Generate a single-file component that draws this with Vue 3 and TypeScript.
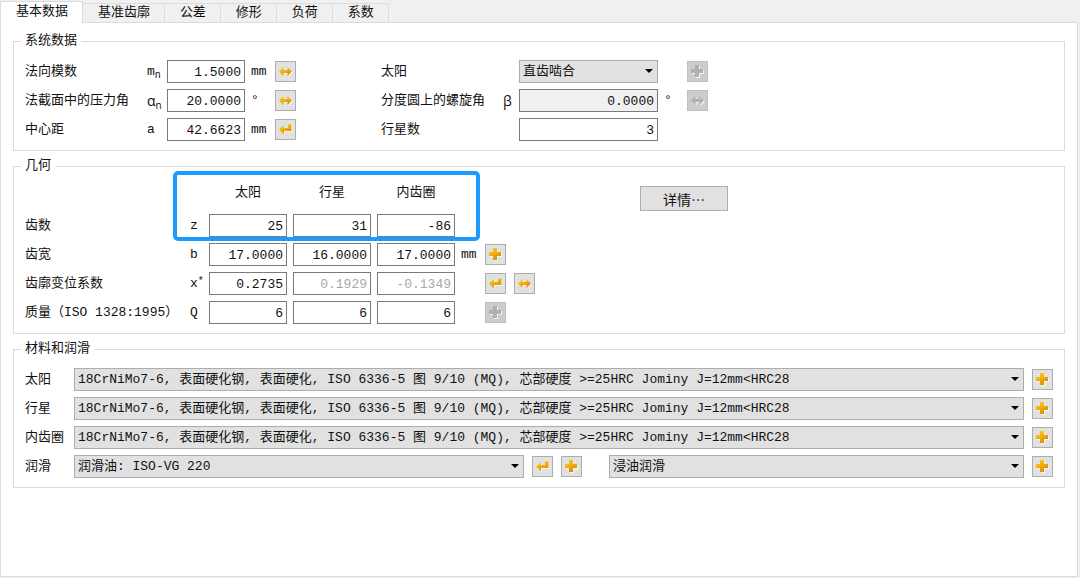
<script setup lang="ts">
import { reactive, ref } from 'vue'

type IconName = 'plus' | 'swap' | 'enter'

interface Field {
  id: string
  label: string
  symbol: string
  sub?: string
  greek?: boolean
  value: string
  unit: string
  icon: IconName
}

interface GeometryRow {
  id: string
  label: string
  symbol: string
  sup?: string
  values: string[]
  computed: boolean[]
  unit: string
  icons: IconName[]
  locked?: boolean
}

const tabs: string[] = ['基本数据', '基准齿廓', '公差', '修形', '负荷', '系数']
const activeTab = ref(0)

const system = reactive<Field[]>([
  { id: 'mn', label: '法向模数', symbol: 'm', sub: 'n', value: '1.5000', unit: 'mm', icon: 'swap' },
  { id: 'alpha', label: '法截面中的压力角', symbol: 'α', sub: 'n', greek: true, value: '20.0000', unit: '°', icon: 'swap' },
  { id: 'a', label: '中心距', symbol: 'a', value: '42.6623', unit: 'mm', icon: 'enter' },
])

const mesh = ref('直齿啮合')
const helix = ref('0.0000')
const planets = ref('3')

const gears: string[] = ['太阳', '行星', '内齿圈']

const geometry = reactive<GeometryRow[]>([
  { id: 'z', label: '齿数', symbol: 'z', values: ['25', '31', '-86'], computed: [false, false, false], unit: '', icons: [] },
  { id: 'b', label: '齿宽', symbol: 'b', values: ['17.0000', '16.0000', '17.0000'], computed: [false, false, false], unit: 'mm', icons: ['plus'] },
  { id: 'x', label: '齿廓变位系数', symbol: 'x', sup: '*', values: ['0.2735', '0.1929', '-0.1349'], computed: [false, true, true], unit: '', icons: ['enter', 'swap'] },
  { id: 'q', label: '质量（ISO 1328:1995）', symbol: 'Q', values: ['6', '6', '6'], computed: [false, false, false], unit: '', icons: ['plus'], locked: true },
])

const steel = '18CrNiMo7-6, 表面硬化钢, 表面硬化, ISO 6336-5 图 9/10 (MQ), 芯部硬度 >=25HRC Jominy J=12mm<HRC28'
const materials = reactive([steel, steel, steel])
const oil = ref('润滑油: ISO-VG 220')
const method = ref('浸油润滑')

const iconTitles: Record<IconName, string> = { plus: '更多', swap: '换算', enter: '计算' }
</script>

<template>
  <div class="page">
    <svg class="defs" aria-hidden="true">
      <defs>
        <linearGradient id="gold" x1="0" y1="0" x2="0.6" y2="1">
          <stop offset="0" stop-color="#ffd21a" />
          <stop offset="0.5" stop-color="#f3b010" />
          <stop offset="1" stop-color="#dc8a08" />
        </linearGradient>
        <symbol id="plus" viewBox="0 0 19 19">
          <path d="M7 3h4v4h4v4h-4v4h-4v-4h-4v-4h4z" />
        </symbol>
        <symbol id="swap" viewBox="0 0 19 19">
          <path d="M3 9.5L7.5 5v3h4V5L16 9.5 11.5 14v-3h-4v3z" />
        </symbol>
        <symbol id="enter" viewBox="0 0 19 19">
          <path d="M3 9.5L8 5v3h4V4.500h3.500V11H8v3.500z" />
        </symbol>
      </defs>
    </svg>

    <div class="tabs" role="tablist">
      <button
        v-for="(tab, i) in tabs"
        :key="tab"
        type="button"
        role="tab"
        class="tab"
        :class="{ active: i === activeTab }"
        :aria-selected="i === activeTab"
        @click="activeTab = i"
      >{{ tab }}</button>
    </div>

    <main class="pane">
      <fieldset class="group">
        <legend>系统数据</legend>
        <div class="system">
          <div class="column left">
            <template v-for="f in system" :key="f.id">
              <label :for="f.id">{{ f.label }}</label>
              <span class="symbol" :class="{ greek: f.greek }">{{ f.symbol }}<sub v-if="f.sub">{{ f.sub }}</sub></span>
              <input :id="f.id" v-model="f.value" class="field" type="text" />
              <span class="unit">{{ f.unit }}</span>
              <button type="button" class="tool" :aria-label="iconTitles[f.icon]">
                <svg class="icon"><use class="shade" :href="'#' + f.icon" x="1" y="1" /><use :href="'#' + f.icon" /></svg>
              </button>
            </template>
          </div>
          <div class="column right">
            <label for="mesh">太阳</label>
            <span></span>
            <div class="combo">
              <select id="mesh" v-model="mesh"><option>直齿啮合</option></select>
            </div>
            <span></span>
            <button type="button" class="tool" disabled aria-label="更多">
              <svg class="icon"><use class="shade" href="#plus" x="1" y="1" /><use href="#plus" /></svg>
            </button>

            <label for="helix">分度圆上的螺旋角</label>
            <span class="symbol greek">β</span>
            <input id="helix" v-model="helix" class="field" type="text" readonly />
            <span class="unit">°</span>
            <button type="button" class="tool" disabled aria-label="换算">
              <svg class="icon"><use class="shade" href="#swap" x="1" y="1" /><use href="#swap" /></svg>
            </button>

            <label for="planets">行星数</label>
            <span></span>
            <input id="planets" v-model="planets" class="field" type="text" />
          </div>
        </div>
      </fieldset>

      <fieldset class="group geometry-group">
        <legend>几何</legend>
        <div class="geometry">
          <div class="gear-grid">
            <span v-for="(g, i) in gears" :key="g" class="head" :class="{ first: i === 0 }">{{ g }}</span>
            <template v-for="row in geometry" :key="row.id">
              <label class="row-label" :for="row.id + '0'">{{ row.label }}</label>
              <span class="symbol">{{ row.symbol }}<sup v-if="row.sup">{{ row.sup }}</sup></span>
              <input
                v-for="(g, i) in gears"
                :id="row.id + i"
                :key="g"
                v-model="row.values[i]"
                class="field"
                :class="{ computed: row.computed[i] }"
                type="text"
                :aria-label="row.label + ' ' + g"
              />
              <span>{{ row.unit }}</span>
              <div class="tools">
                <button
                  v-for="icon in row.icons"
                  :key="icon"
                  type="button"
                  class="tool"
                  :disabled="row.locked"
                  :aria-label="iconTitles[icon]"
                >
                  <svg class="icon"><use class="shade" :href="'#' + icon" x="1" y="1" /><use :href="'#' + icon" /></svg>
                </button>
              </div>
            </template>
            <div class="highlight"></div>
          </div>
          <button type="button" class="details">详情…</button>
        </div>
      </fieldset>

      <fieldset class="group">
        <legend>材料和润滑</legend>
        <div class="materials">
          <div v-for="(g, i) in gears" :key="g" class="line">
            <label :for="'material' + i">{{ g }}</label>
            <div class="combo grow">
              <select :id="'material' + i" v-model="materials[i]"><option>{{ steel }}</option></select>
            </div>
            <button type="button" class="tool" aria-label="更多">
              <svg class="icon"><use class="shade" href="#plus" x="1" y="1" /><use href="#plus" /></svg>
            </button>
          </div>
          <div class="line">
            <label for="oil">润滑</label>
            <div class="combo oil">
              <select id="oil" v-model="oil"><option>润滑油: ISO-VG 220</option></select>
            </div>
            <div class="tools oil-tools">
              <button type="button" class="tool" aria-label="计算">
                <svg class="icon"><use class="shade" href="#enter" x="1" y="1" /><use href="#enter" /></svg>
              </button>
              <button type="button" class="tool" aria-label="更多">
                <svg class="icon"><use class="shade" href="#plus" x="1" y="1" /><use href="#plus" /></svg>
              </button>
            </div>
            <div class="combo method">
              <select v-model="method" aria-label="润滑方式"><option>浸油润滑</option></select>
            </div>
            <button type="button" class="tool" aria-label="更多">
              <svg class="icon"><use class="shade" href="#plus" x="1" y="1" /><use href="#plus" /></svg>
            </button>
          </div>
        </div>
      </fieldset>
    </main>
  </div>
</template>

<style>
body {
  background: #f0f0f0;
}
</style>

<style scoped>
.page,
.page button,
.page input,
.page select {
  font-family: "Liberation Mono", "Noto Sans CJK SC", monospace;
  font-size: 13px;
  font-size-adjust: ch-width 0.6;
  line-height: 16px;
  color: #111;
}

.page {
  box-sizing: border-box;
  min-height: 100vh;
  padding: 1px 2px 1px 0;
  display: flex;
  flex-direction: column;
  background: #f0f0f0;
}

.defs {
  position: absolute;
  width: 0;
  height: 0;
}

.tabs {
  display: flex;
  align-items: flex-end;
  height: 21px;
}

.tab {
  box-sizing: border-box;
  height: 19px;
  margin: 0;
  padding: 0 14px 0 15px;
  border: solid #dcdcdc;
  border-width: 1px 1px 0 0;
  background: #f0f0f0;
  white-space: nowrap;
}

.page .tab {
  line-height: 18px;
}

.tab.active {
  height: 22px;
  margin-bottom: -1px;
  padding-bottom: 2px;
  border-left-width: 1px;
  background: #fff;
  position: relative;
}

.pane {
  flex: 1;
  padding: 10px 12px 12px;
  border: 1px solid #dcdcdc;
  background: #fff;
}

.group {
  min-width: 0;
  margin: 0 0 7px;
  padding: 11px 11px 9px;
  border: 1px solid #dcdcdc;
}

.geometry-group {
  padding-top: 7px;
}

legend {
  height: 16px;
  margin-left: -4px;
  padding: 0 4px;
}

label,
.head,
.symbol {
  white-space: nowrap;
}

.system {
  display: flex;
  gap: 85px;
}

.column {
  display: grid;
  grid-auto-rows: 23px;
  row-gap: 6px;
  align-items: center;
}

.left {
  grid-template-columns: 122px 20px 78px 30px 21px;
}

.right {
  grid-template-columns: 122px 16px 139px 29px 21px;
}

.symbol sub,
.symbol sup {
  font-size: 10px;
  line-height: 0;
}

.symbol sub {
  vertical-align: -3px;
}

.symbol sup {
  vertical-align: 3px;
}

.greek {
  font-family: "Open Sans", sans-serif;
  font-size: 14px;
  font-size-adjust: none;
}

.unit {
  padding-left: 6px;
}

.field {
  box-sizing: border-box;
  width: 100%;
  min-width: 0;
  height: 23px;
  margin: 0;
  padding: 2px 3px 0;
  border: 1px solid #7a7a7a;
  border-radius: 0;
  background: #fff;
  text-align: right;
}

.field:read-only {
  background: #f0f0f0;
}

.page .field.computed {
  color: #a8a8a8;
}

.combo {
  position: relative;
  min-width: 0;
}

.combo::after {
  content: "";
  position: absolute;
  right: 5px;
  top: 9px;
  border: solid transparent;
  border-width: 4px 4px 0;
  border-top-color: #000;
  pointer-events: none;
}

select {
  appearance: none;
  display: block;
  box-sizing: border-box;
  width: 100%;
  height: 23px;
  margin: 0;
  padding: 0 20px 0 3px;
  border: 1px solid #adadad;
  border-radius: 0;
  background: #e1e1e1;
}

.tool {
  flex: none;
  box-sizing: border-box;
  width: 21px;
  height: 21px;
  margin: 0;
  padding: 0;
  border: 1px solid #adadad;
  background: #e1e1e1;
}

.icon {
  display: block;
  width: 19px;
  height: 19px;
  fill: url(#gold);
}

.icon .shade {
  fill: #fff;
  fill-opacity: 0.7;
}

.tool:disabled {
  border-color: #bfbfbf;
  background: #ccc;
}

.tool:disabled .icon {
  fill: #b0b0b0;
}

.tool:disabled .shade {
  fill: #f4f4f4;
  fill-opacity: 1;
}

.tools {
  display: flex;
  gap: 8px;
}

.geometry {
  display: flex;
  align-items: flex-start;
  gap: 105px;
}

.gear-grid {
  position: relative;
  display: grid;
  grid-template-columns: 159px 13px 78px 78px 78px 18px 50px;
  grid-auto-rows: 23px;
  gap: 6px;
  align-items: center;
}

.gear-grid {
  grid-template-rows: 27px;
}

.head {
  height: 23px;
  line-height: 23px;
  align-self: start;
  text-align: center;
}

.head.first {
  grid-column: 3;
}

.row-label {
  grid-column: 1;
}

.highlight {
  position: absolute;
  box-sizing: border-box;
  left: 148px;
  top: -10px;
  width: 307px;
  height: 70px;
  border: 4px solid #1b9bff;
  border-radius: 5px;
  pointer-events: none;
}

.details {
  box-sizing: border-box;
  width: 88px;
  height: 25px;
  margin: 5px 0 0;
  padding: 0;
  border: 1px solid #adadad;
  background: #e1e1e1;
}

.page .details {
  font-family: "Noto Sans CJK SC", sans-serif;
}

.materials {
  display: grid;
  row-gap: 6px;
}

.line {
  display: flex;
  align-items: center;
}

.line label {
  flex: none;
  width: 49px;
}

.line > .tool {
  margin-left: 8px;
}

.grow {
  flex: 1;
}

.oil {
  flex: 451 1 0;
}

.oil-tools {
  margin: 0 27px 0 8px;
}

.method {
  flex: 416 1 0;
}
</style>
